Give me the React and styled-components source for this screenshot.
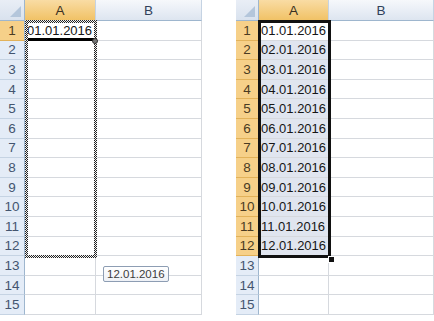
import React from 'react';
import styled, { createGlobalStyle, css } from 'styled-components';

const ROW_H = 19.6;
const HEAD_H = 21;
const ROWS = Array.from({ length: 15 }, (_, i) => i + 1);
const DATES = ROWS.slice(0, 12).map(n => `${String(n).padStart(2, '0')}.01.2016`);

const GlobalStyle = createGlobalStyle`
  html, body {
    margin: 0;
    padding: 0;
    background: #fff;
  }
  body {
    font-family: "Liberation Sans", Arial, sans-serif;
  }
`;

const Page = styled.div`
  display: flex;
  gap: 34px;
  width: 434px;
  height: 321px;
  overflow: hidden;
`;

const Sheet = styled.div`
  position: relative;
  display: grid;
  grid-template-columns: ${props => props.$cols};
  grid-template-rows: ${HEAD_H}px repeat(15, ${ROW_H}px);
  font-size: 13px;
  color: #161616;
`;

const Corner = styled.div`
  grid-row: 1;
  grid-column: 1;
  position: relative;
  background: linear-gradient(#e9eef6, #d9e2ee);
  border-right: 1px solid #9eb6ce;
  border-bottom: 1px solid #9eb6ce;
  box-sizing: border-box;

  &::after {
    content: '';
    position: absolute;
    right: 3px;
    bottom: 3px;
    border-left: 11px solid transparent;
    border-bottom: 11px solid #b4c6db;
  }
`;

const blueHead = css`
  background: linear-gradient(#f6f8fb, #dde5f0);
  color: #30415a;
`;

const orangeHead = css`
  background: linear-gradient(#f9dca4, #f1c266);
  color: #3a3022;
`;

const ColHeader = styled.div`
  grid-row: 1;
  grid-column: ${props => props.$col};
  display: flex;
  align-items: center;
  justify-content: center;
  box-sizing: border-box;
  border-right: 1px solid #c5d3e3;
  border-bottom: 1px solid #9eb6ce;
  padding-top: 1px;
  font-size: 13.5px;
  ${props => (props.$active ? orangeHead : blueHead)}
`;

const RowHeader = styled.div`
  grid-row: ${props => props.$row};
  grid-column: 1;
  display: flex;
  align-items: center;
  justify-content: center;
  box-sizing: border-box;
  border-right: 1px solid #9eb6ce;
  border-bottom: 1px solid ${props => (props.$active ? '#e2b25a' : '#c5d3e3')};
  background: ${props => (props.$active ? '#f6d089' : '#e4ecf7')};
  color: ${props => (props.$active ? '#4a3b22' : '#43556f')};
  font-size: 13.5px;
`;

const Cell = styled.div`
  grid-row: ${props => props.$row};
  grid-column: ${props => props.$col};
  display: flex;
  align-items: center;
  box-sizing: border-box;
  padding-left: 2px;
  white-space: nowrap;
  border-right: 1px solid #d6d9de;
  border-bottom: 1px solid #d6d9de;
  background: ${props => (props.$selected ? '#e0e5ef' : '#fff')};
  ${props => props.$cursor && 'border-bottom: 3px solid #000; padding-top: 2px;'}
`;

/* selection overlays, placed on the grid over the range they mark */
const Range = styled.div`
  grid-column: 2;
  grid-row: 2 / span 12;
  position: relative;
  pointer-events: none;
  z-index: 2;
`;

const Ants = styled.div`
  position: absolute;
  inset: -1px -1px -2px 0;
  padding: 3px;
  background-image: repeating-conic-gradient(#222 0 25%, #f2f2f2 0 50%);
  background-size: 2px 2px;
  -webkit-mask: linear-gradient(#000 0 0) content-box, linear-gradient(#000 0 0);
  -webkit-mask-composite: xor;
  mask: linear-gradient(#000 0 0) content-box exclude, linear-gradient(#000 0 0);
`;

const SolidFrame = styled.div`
  position: absolute;
  inset: -1px -2px -2px -1px;
  border: 3px solid #111;
`;

const Handle = styled.div`
  position: absolute;
  box-sizing: border-box;
  ${props =>
    props.$round
      ? `
    left: calc(100% - 4px);
    top: ${ROW_H - 3}px;
    width: 6px;
    height: 6px;
    border-radius: 50%;
    background: #777;
    border: 1px solid #333;
  `
      : `
    right: -6px;
    bottom: -7px;
    width: 7px;
    height: 7px;
    background: #111;
    border: 1px solid #fff;
  `}
`;

const Tip = styled.div`
  position: absolute;
  left: 103px;
  top: 266px;
  padding: 1px 3px;
  font-size: 11.5px;
  color: #3c3c3c;
  background: linear-gradient(#ffffff, #eef1f6);
  border: 1px solid #8d9db3;
  border-radius: 2px;
  z-index: 3;
`;

const LeftSheet = () => (
  <Sheet $cols="25px 71px 106px">
    <Corner />
    <ColHeader $col={2} $active>A</ColHeader>
    <ColHeader $col={3}>B</ColHeader>
    {ROWS.map(n => (
      <React.Fragment key={n}>
        <RowHeader $row={n + 1} $active={n === 1}>{n}</RowHeader>
        <Cell $row={n + 1} $col={2} $cursor={n === 1}>{n === 1 ? DATES[0] : ''}</Cell>
        <Cell $row={n + 1} $col={3} />
      </React.Fragment>
    ))}
    <Range>
      <Ants />
      <Handle $round />
    </Range>
    <Tip>12.01.2016</Tip>
  </Sheet>
);

const RightSheet = () => (
  <Sheet $cols="23px 70px 105px">
    <Corner />
    <ColHeader $col={2} $active>A</ColHeader>
    <ColHeader $col={3}>B</ColHeader>
    {ROWS.map(n => (
      <React.Fragment key={n}>
        <RowHeader $row={n + 1} $active={n <= 12}>{n}</RowHeader>
        <Cell $row={n + 1} $col={2} $selected={n > 1 && n <= 12}>{DATES[n - 1] || ''}</Cell>
        <Cell $row={n + 1} $col={3} />
      </React.Fragment>
    ))}
    <Range>
      <SolidFrame />
      <Handle />
    </Range>
  </Sheet>
);

export default function App() {
  return (
    <>
      <GlobalStyle />
      <Page>
        <LeftSheet />
        <RightSheet />
      </Page>
    </>
  );
}
